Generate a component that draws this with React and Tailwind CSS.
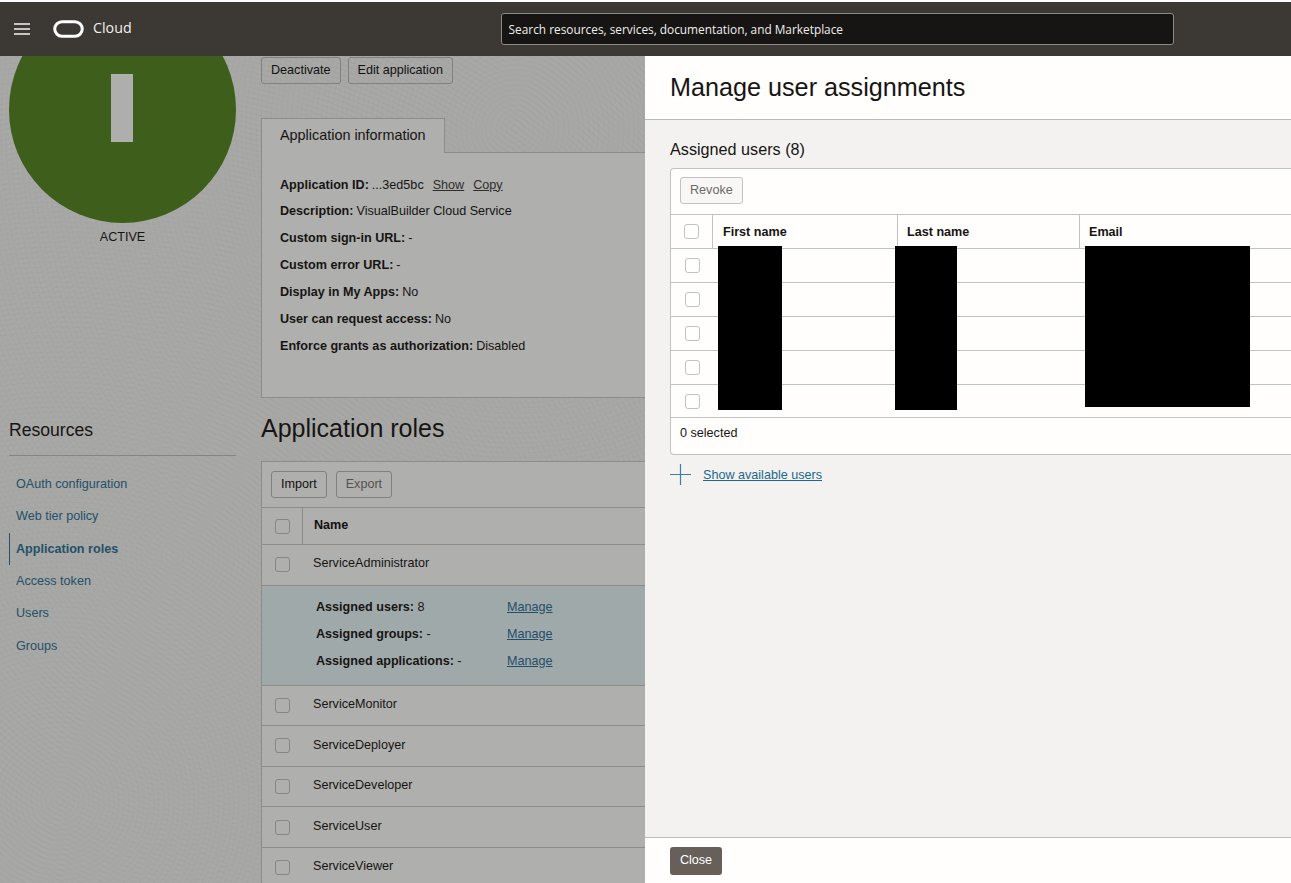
const font = { fontFamily: '"Liberation Sans", Arial, sans-serif' };

function Check({ className = "" }) {
  return <span className={"block w-[15px] h-[15px] rounded-[3px] border border-[#c4c2bf] bg-white/60 " + className} />;
}

function DimCheck() {
  return <span className="block w-[15px] h-[15px] rounded-[3px] border border-[#878683] bg-transparent" />;
}

function Btn({ children, dim }) {
  return (
    <span className={"h-[27px] px-[9px] flex items-center rounded-[3px] border border-[#83817d] text-[12.6px] " + (dim ? "text-[#55524e]" : "text-[#111]")}>
      {children}
    </span>
  );
}

function Info({ label, children }) {
  return (
    <div className="h-[26.85px] flex items-center text-[12.6px] text-[#161513] whitespace-nowrap">
      <b className="mr-[3px]">{label}</b>
      {children}
    </div>
  );
}

function RoleRow({ name }) {
  return (
    <div className="h-[40.6px] shrink-0 flex items-center border-b border-[#8f8c88]">
      <span className="w-[41px] flex justify-center"><DimCheck /></span>
      <span className="ml-[10px] mb-[2px] text-[12.6px] text-[#161513]">{name}</span>
    </div>
  );
}

function Assign({ label, value }) {
  return (
    <div className="h-[27px] flex items-center text-[12.6px] text-[#161513] whitespace-nowrap">
      <span className="w-[191px]"><b>{label}</b> {value}</span>
      <a className="text-[#1f4f6b] underline">Manage</a>
    </div>
  );
}

function NavItem({ children, active }) {
  return (
    <div className={"h-[32.4px] flex items-center pl-[6px] text-[12.6px] text-[#245069] " + (active ? "font-bold border-l border-[#245069]" : "border-l border-transparent")}>
      {children}
    </div>
  );
}

function UserRow() {
  return (
    <div className="h-[33.9px] flex items-center border-b border-[#c4c2bf]">
      <span className="w-[42px] flex justify-center"><Check /></span>
    </div>
  );
}

export default function App() {
  return (
    <div style={font} className="relative w-[1291px] h-[883px] overflow-hidden flex flex-col bg-white">
      <div className="h-[2px] bg-white shrink-0" />
      <header className="h-[54px] shrink-0 bg-[#3c3833] flex items-center text-white">
        <svg width="16" height="12" viewBox="0 0 16 12" className="ml-[14px]">
          <path d="M0 1h16M0 6h16M0 11h16" stroke="#f5f4f2" strokeWidth="1.6" />
        </svg>
        <svg width="31" height="20" viewBox="0 0 31 20" className="ml-[23px]">
          <rect x="1.75" y="2.75" width="27.5" height="14.5" rx="7.25" fill="none" stroke="#fff" strokeWidth="3" />
        </svg>
        <span className="ml-[9px] mb-[2px] text-[14.25px] text-[#f1efed]" style={{ fontFamily: '"Open Sans", sans-serif' }}>Cloud</span>
        <div className="ml-[369px] w-[673px] h-[32px] bg-[#161513] border border-[#8b8a86] rounded-[3px] flex items-center px-[7px] pt-[1px] text-[11.85px] text-[#f1efed]" style={{ fontFamily: '"Open Sans", sans-serif' }}>
          Search resources, services, documentation, and Marketplace
        </div>
      </header>

      <div className="flex-1 flex min-h-0">
        {/* dimmed page */}
        <div className="w-[645px] shrink-0 overflow-hidden flex bg-[#a8a8a6] bg-[repeating-radial-gradient(circle_at_515px_73px,#0000_0px,#0000_3px,#00000005_4px,#0000_5px),repeating-radial-gradient(circle_at_60px_745px,#0000_0px,#0000_3px,#00000005_4px,#0000_5px),repeating-radial-gradient(circle_at_175px_500px,#0000_0px,#0000_3px,#00000004_4px,#0000_5px)]">
          <aside className="w-[261px] shrink-0 pl-[9px] pr-[25px]">
            <div className="w-[227px] h-[227px] -mt-[60px] rounded-full bg-[#3e5e1c] flex items-center justify-center">
              <span className="block w-[22px] h-[68px] mb-[4px] mr-[2px] bg-[#aeaeac]" />
            </div>
            <div className="mt-[5px] text-center text-[12.6px] leading-[18px] text-[#161513]">ACTIVE</div>
            <div className="mt-[170px] text-[17.6px] leading-[28px] text-[#161513] pb-[11px] border-b border-[#868583]">Resources</div>
            <nav className="mt-[12px]">
              <NavItem>OAuth configuration</NavItem>
              <NavItem>Web tier policy</NavItem>
              <NavItem active>Application roles</NavItem>
              <NavItem>Access token</NavItem>
              <NavItem>Users</NavItem>
              <NavItem>Groups</NavItem>
            </nav>
          </aside>

          <main className="flex-1 min-w-0">
            <div className="flex gap-[7px] mt-px">
              <Btn>Deactivate</Btn>
              <Btn>Edit application</Btn>
            </div>

            <section className="mt-[34px] h-[280px] border-l border-b border-[#8f8c88] flex flex-col">
              <div className="flex h-[35px] shrink-0">
                <div className="w-[184px] -ml-px bg-[#afafad] border-l border-t border-r border-[#8f8c88] pl-[18px] flex items-center text-[14.4px] text-[#161513]">
                  Application information
                </div>
                <div className="flex-1 border-b border-[#8f8c88]" />
              </div>
              <div className="flex-1 bg-[#afafad] pl-[18px] pt-[18.6px]">
                <Info label="Application ID:">
                  <span>...3ed5bc</span>
                  <a className="underline ml-[9px] text-[#2f2d2a]">Show</a>
                  <a className="underline ml-[9px] text-[#2f2d2a]">Copy</a>
                </Info>
                <Info label="Description:">VisualBuilder Cloud Service</Info>
                <Info label="Custom sign-in URL:">-</Info>
                <Info label="Custom error URL:">-</Info>
                <Info label="Display in My Apps:">No</Info>
                <Info label="User can request access:">No</Info>
                <Info label="Enforce grants as authorization:">Disabled</Info>
              </div>
            </section>

            <h2 className="mt-[14px] text-[25px] leading-[32px] text-[#161513]">Application roles</h2>

            <section className="mt-[17px] bg-[#afafad] border-l border-t border-[#8f8c88]">
              <div className="h-[46px] flex items-center gap-[9px] pl-[9px] pb-[1px] border-b border-[#8f8c88]">
                <Btn>Import</Btn>
                <Btn dim>Export</Btn>
              </div>
              <div className="h-[37px] flex items-center border-b border-[#8f8c88]">
                <span className="w-[41px] h-full flex items-center justify-center border-r border-[#8f8c88]"><DimCheck /></span>
                <b className="ml-[11px] mb-[2px] text-[12.6px] text-[#111]">Name</b>
              </div>
              <RoleRow name="ServiceAdministrator" />
              <div className="h-[100px] shrink-0 bg-[#a0a9aa] border-b border-[#8f8c88] pl-[54px] pt-[8px]">
                <Assign label="Assigned users:" value="8" />
                <Assign label="Assigned groups:" value="-" />
                <Assign label="Assigned applications:" value="-" />
              </div>
              <RoleRow name="ServiceMonitor" />
              <RoleRow name="ServiceDeployer" />
              <RoleRow name="ServiceDeveloper" />
              <RoleRow name="ServiceUser" />
              <RoleRow name="ServiceViewer" />
            </section>
          </main>
        </div>

        {/* drawer */}
        <div className="flex-1 min-w-0 flex flex-col bg-[#f3f2f1]">
          <div className="h-[64px] shrink-0 bg-[#fffefd] border-b border-[#bcbab7] pl-[25px] flex items-center text-[25.2px] text-[#161513]">
            Manage user assignments
          </div>
          <div className="flex-1 pl-[25px]">
            <div className="mt-[18px] text-[16.2px] leading-[22px] text-[#161513]">Assigned users (8)</div>
            <div className="relative mt-[8px] bg-[#fffefd] border-l border-t border-b border-[#c4c2bf] rounded-l-[4px]">
              <div className="h-[46px] flex items-center pl-[9px] pb-[2px] border-b border-[#c4c2bf]">
                <span className="h-[27px] px-[9px] flex items-center rounded-[3px] border border-[#c4c2bf] bg-[#f8f7f6] text-[12.6px] text-[#6b6965]">Revoke</span>
              </div>
              <div className="h-[34px] flex items-center border-b border-[#c4c2bf] text-[12.6px] font-bold text-[#161513]">
                <span className="w-[42px] h-full flex items-center justify-center border-r border-[#c4c2bf]"><Check /></span>
                <span className="w-[185px] h-full flex items-center pl-[10px] pt-[1px] border-r border-[#c4c2bf]">First name</span>
                <span className="w-[182px] h-full flex items-center pl-[9px] pt-[1px] border-r border-[#c4c2bf]">Last name</span>
                <span className="pl-[9px] pt-[1px]">Email</span>
              </div>
              <UserRow /><UserRow /><UserRow /><UserRow /><UserRow />
              <div className="h-[35.5px] flex items-center pl-[9px] pb-[5px] text-[12.6px] text-[#161513]">0 selected</div>
              {/* redactions */}
              <span className="absolute left-[47px] top-[77px] w-[64px] h-[164px] bg-black" />
              <span className="absolute left-[224px] top-[77px] w-[62px] h-[164px] bg-black" />
              <span className="absolute left-[414px] top-[77px] w-[165px] h-[161px] bg-black" />
            </div>
            <div className="mt-[10px] flex items-center h-[20px]">
              <svg width="21" height="21" viewBox="0 0 21 21">
                <path d="M10.5 0v21M0 10.5h21" stroke="#3f7f9e" strokeWidth="1.2" />
              </svg>
              <a className="ml-[12px] text-[12.6px] text-[#22688c] underline">Show available users</a>
            </div>
          </div>
          <div className="h-[46px] shrink-0 bg-[#fffefd] border-t border-[#bcbab7] pl-[25px] pt-[9px]">
            <span className="inline-flex h-[28px] w-[52px] items-center justify-center pb-[2px] rounded-[3px] bg-[#665f5a] text-[12.6px] text-white">Close</span>
          </div>
        </div>
      </div>
    </div>
  );
}
